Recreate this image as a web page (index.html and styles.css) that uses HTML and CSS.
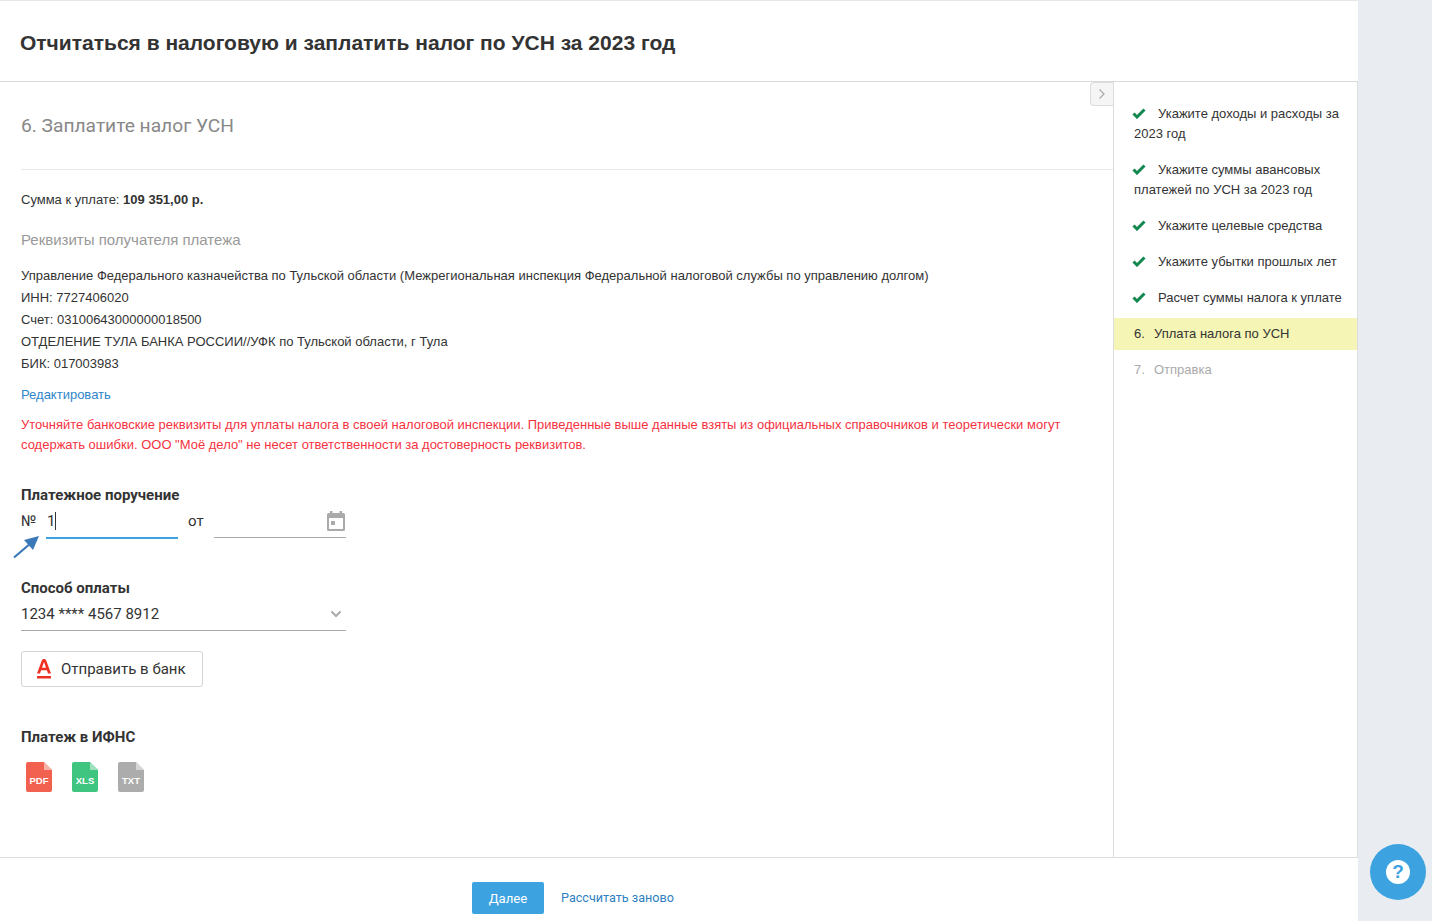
FILE: index.html
```html
<!DOCTYPE html>
<html lang="ru">
<head>
<meta charset="utf-8">
<title>УСН</title>
<link rel="stylesheet" href="styles.css">
</head>
<body>
<div class="panel">
  <header class="head"><h1>Отчитаться в налоговую и заплатить налог по УСН за 2023 год</h1></header>
  <div class="middle">
    <main class="content">
      <h2 class="step-title">6. Заплатите налог УСН</h2>
      <p class="sum">Сумма к уплате: <b>109 351,00 р.</b></p>
      <h3 class="req-title">Реквизиты получателя платежа</h3>
      <div class="req">
        <div>Управление Федерального казначейства по Тульской области (Межрегиональная инспекция Федеральной налоговой службы по управлению долгом)</div>
        <div>ИНН: 7727406020</div>
        <div>Счет: 03100643000000018500</div>
        <div>ОТДЕЛЕНИЕ ТУЛА БАНКА РОССИИ//УФК по Тульской области, г Тула</div>
        <div>БИК: 017003983</div>
      </div>
      <a class="edit">Редактировать</a>
      <p class="warn">Уточняйте банковские реквизиты для уплаты налога в своей налоговой инспекции. Приведенные выше данные взяты из официальных справочников и теоретически могут содержать ошибки. ООО "Моё дело" не несет ответственности за достоверность реквизитов.</p>
      <div class="label first">Платежное поручение</div>
      <div class="po-row">
        <span class="no">№</span>
        <span class="num"><span>1</span><i class="caret"></i></span>
        <span class="from">от</span>
        <span class="date">
          <svg width="20" height="22" viewBox="0 0 20 22"><path fill="#aaa" d="M4 1h2.500v2h7V1H16v2h1.500A1.500 1.500 0 0 1 19 4.500v15a1.500 1.500 0 0 1-1.500 1.500h-15A1.500 1.500 0 0 1 1 19.500v-15A1.500 1.500 0 0 1 2.500 3H4zM3 8v11h14V8z"/><rect x="5" y="11" width="4" height="4" fill="#aaa"/></svg>
        </span>
        <svg class="arrow" width="28" height="24" viewBox="0 0 28 24"><path d="M1 22.500 L18 8" stroke="#3b78b8" stroke-width="2.200" fill="none"/><path d="M26 1 L11 5 L20 15z" fill="#3b78b8"/></svg>
      </div>
      <div class="label second">Способ оплаты</div>
      <div class="select">
        <span>1234 **** 4567 8912</span>
        <svg width="12" height="8" viewBox="0 0 12 8"><path d="M1.500 1.500 6 6l4.500-4.500" fill="none" stroke="#aaa" stroke-width="2"/></svg>
      </div>
      <button class="bank">
        <svg width="16" height="22" viewBox="0 0 16 22"><path fill="#ef3124" d="M8 1c1.300 0 1.900.6 2.300 1.700L15 15.500h-3l-1.100-3.200H5.100L4 15.500H1L5.700 2.700C6.100 1.600 6.700 1 8 1zm0 3L6 9.800h4zM1 18h14v2.600H1z"/></svg>
        <span>Отправить в банк</span>
      </button>
      <div class="label third">Платеж в ИФНС</div>
      <div class="files">
        <span class="file pdf"><i></i><b>PDF</b></span>
        <span class="file xls"><i></i><b>XLS</b></span>
        <span class="file txt"><i></i><b>TXT</b></span>
      </div>
      <button class="toggle"><svg width="8" height="12" viewBox="0 0 8 12"><path d="M1.500 1.500 6 6l-4.500 4.500" fill="none" stroke="#aaa" stroke-width="1.200"/></svg></button>
    </main>
    <aside class="steps">
      <div class="st"><svg class="chk" viewBox="0 0 14 11"><path d="M1.500 5.500 5 9l7.500-7.500" fill="none" stroke="#12884f" stroke-width="3"/></svg>Укажите доходы и расходы за 2023 год</div>
      <div class="st"><svg class="chk" viewBox="0 0 14 11"><path d="M1.500 5.500 5 9l7.500-7.500" fill="none" stroke="#12884f" stroke-width="3"/></svg>Укажите суммы авансовых платежей по УСН за 2023 год</div>
      <div class="st"><svg class="chk" viewBox="0 0 14 11"><path d="M1.500 5.500 5 9l7.500-7.500" fill="none" stroke="#12884f" stroke-width="3"/></svg>Укажите целевые средства</div>
      <div class="st"><svg class="chk" viewBox="0 0 14 11"><path d="M1.500 5.500 5 9l7.500-7.500" fill="none" stroke="#12884f" stroke-width="3"/></svg>Укажите убытки прошлых лет</div>
      <div class="st"><svg class="chk" viewBox="0 0 14 11"><path d="M1.500 5.500 5 9l7.500-7.500" fill="none" stroke="#12884f" stroke-width="3"/></svg>Расчет суммы налога к уплате</div>
      <div class="st cur"><span class="n">6.</span>Уплата налога по УСН</div>
      <div class="st off"><span class="n">7.</span>Отправка</div>
    </aside>
  </div>
  <footer class="foot">
    <button class="next">Далее</button>
    <a class="again">Рассчитать заново</a>
  </footer>
</div>
<button class="help" aria-label="Помощь"><span>?</span></button>
</body>
</html>
```

FILE: styles.css
```css
* { box-sizing: border-box; }
html, body { margin: 0; height: 921px; overflow: hidden; }
body { background: #e9edf1; font-family: "Liberation Sans", Arial, sans-serif; color: #333; font-size: 13px; position: relative; }
h1, h2, h3, p { margin: 0; font-weight: normal; }
.panel { width: 1358px; height: 921px; background: #fff; display: flex; flex-direction: column; border-top: 1px solid #e6e6e6; }
.head { height: 81px; border-bottom: 1px solid #d9d9d9; padding: 27px 20px 0; flex: none; }
.head h1 { font-size: 21px; line-height: 30px; font-weight: 700; color: #333; }
.middle { display: flex; height: 776px; flex: none; border-bottom: 1px solid #ddd; }
.content { width: 1113px; position: relative; padding: 0 21px; flex: none; }
.step-title { font-size: 19.200px; line-height: 28px; color: #888; padding: 30px 0 29px; margin-right: -21px; border-bottom: 1px solid #eaeaea; height: 88px; font-family: Roboto, sans-serif; }
.sum { line-height: 20px; margin-top: 20px; }
.req-title { font-size: 15px; line-height: 20px; color: #999; margin-top: 20px; }
.req { margin-top: 15px; line-height: 22px; }
.edit { display: block; margin-top: 10px; line-height: 20px; color: #2f86c9; }
.warn { margin-top: 10px; line-height: 20px; color: #f5333f; width: 1060px; }
.label { font-weight: 700; font-size: 15px; line-height: 20px; color: #333; font-family: Roboto, sans-serif; }
.first { margin-top: 30px; }
.second { margin-top: 39px; }
.third { margin-top: 40px; }
.po-row { display: flex; align-items: flex-start; height: 31px; margin-top: 3px; position: relative; font-size: 15px; line-height: 26px; font-family: Roboto, sans-serif; }
.no { width: 25px; }
.num { width: 132px; height: 31px; border-bottom: 2px solid #3da3e0; display: flex; align-items: flex-start; padding-left: 1px; }
.caret { width: 1px; height: 18px; background: #333; margin-top: 4px; }
.from { margin-left: 10px; width: 26px; }
.date { width: 132px; height: 30px; border-bottom: 1px solid #aaa; display: flex; justify-content: flex-end; }
.date svg { margin-top: 2px; }
.arrow { position: absolute; left: -8px; top: 27px; }
.select { margin-top: 1px; width: 325px; height: 32px; border-bottom: 1px solid #aaa; display: flex; justify-content: space-between; align-items: center; font: 15px Roboto, sans-serif; padding-right: 4px; padding-bottom: 1px; }
.bank { margin-top: 20px; width: 182px; height: 36px; background: #fff; border: 1px solid #d4d4d4; border-radius: 3px; display: flex; align-items: center; padding: 0 0 0 14px; gap: 9px; font: 15px Roboto, sans-serif; color: #333; }
.files { display: flex; gap: 20px; margin-top: 15px; padding-left: 5px; }
.file { width: 26px; height: 30px; border-radius: 2px; position: relative; display: block; color: #fff; text-align: center; clip-path: polygon(0 0, 18px 0, 26px 8px, 26px 30px, 0 30px); }
.file i { position: absolute; right: 0; top: 0; width: 8px; height: 8px; background: rgba(255,255,255,.5); clip-path: polygon(0 0, 100% 100%, 0 100%); }
.file b { font: 700 9.500px/37px "Liberation Sans", sans-serif; display: block; white-space: nowrap; }
.pdf { background: #f2614f; }
.xls { background: #40c581; }
.txt { background: #acacac; }
.toggle { position: absolute; right: 0; top: 0; width: 23px; height: 24px; border: 1px solid #ddd; border-right: 0; background: #f5f5f5; border-radius: 4px 0 0 4px; padding: 0; display: flex; align-items: center; justify-content: center; }
.steps { flex: 1; border-left: 1px solid #ddd; border-right: 1px solid #ddd; padding-top: 18px; }
.st { padding: 4px 14px 10px 20px; line-height: 20px; color: #333; margin-bottom: 2px; }
.chk { width: 14px; height: 11px; margin: 0 12px 0 -2px; vertical-align: -1px; }
.n { display: inline-block; width: 20px; }
.cur { background: #f5f5b5; margin-top: -2px; padding: 6px 14px 6px 20px; height: 32px; margin-bottom: 6px; }
.off { color: #aaa; }
.foot { flex: 1; display: flex; align-items: flex-start; padding: 24px 0 0 472px; gap: 17px; }
.next { width: 72px; height: 32px; background: #3da3e0; color: #fff; border: 0; border-radius: 2px; font: 13.200px Roboto, sans-serif; }
.again { color: #2f7fc1; font: 12.600px/32px Roboto, sans-serif; }
.help { position: absolute; left: 1370px; top: 844px; width: 56px; height: 56px; border-radius: 50%; background: #3da3e0; border: 0; display: flex; align-items: center; justify-content: center; padding: 0; }
.help span { width: 24px; height: 24px; background: #fff; border-radius: 50%; color: #3da3e0; font: 700 19px/24px "Liberation Sans", sans-serif; text-align: center; display: block; }
```
